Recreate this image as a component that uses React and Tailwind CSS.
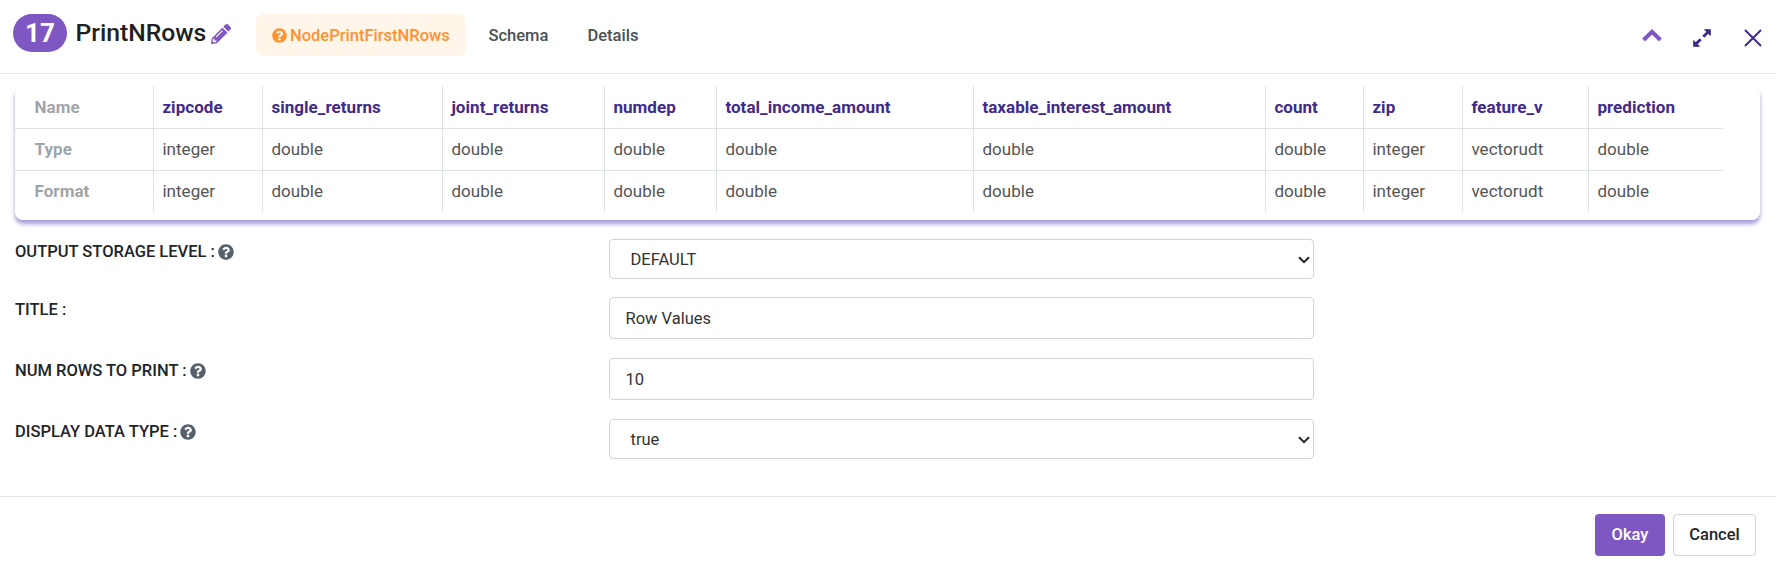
import React from "react";
import { FaQuestionCircle, FaPencilAlt } from "react-icons/fa";

const columns = [
  { name: "zipcode", type: "integer", width: "w-[109px]" },
  { name: "single_returns", type: "double", width: "w-[180px]" },
  { name: "joint_returns", type: "double", width: "w-[162px]" },
  { name: "numdep", type: "double", width: "w-[112px]" },
  { name: "total_income_amount", type: "double", width: "w-[257px]" },
  { name: "taxable_interest_amount", type: "double", width: "w-[292px]" },
  { name: "count", type: "double", width: "w-[98px]" },
  { name: "zip", type: "integer", width: "w-[99px]" },
  { name: "feature_v", type: "vectorudt", width: "w-[126px]" },
  { name: "prediction", type: "double", width: "w-[135px]" },
];

function SchemaRow({ label, field, header, last }) {
  const height = header ? "h-[43px]" : last ? "h-[41px]" : "h-[42px]";
  const pad = header ? "pt-[9px]" : "pt-2";
  return (
    <div className={`flex w-[1708px] text-[17px] tracking-[0.05px] ${height} ${last ? "" : "border-b border-[#dee2e6]"}`}>
      <div className={`w-[138px] pl-[19.5px] font-bold text-[#9fa5ab] ${pad}`}>{label}</div>
      {columns.map((c) => (
        <div
          key={c.name}
          className={`${c.width} ${pad} border-l border-[#dee2e6] pl-[8.4px] ${header ? "font-bold text-[#412a8a]" : "text-[#555555]"}`}
        >
          {c[field]}
        </div>
      ))}
    </div>
  );
}

function Field({ label, help, value, select, className }) {
  return (
    <div className={`flex items-start ${className}`}>
      <div className="flex w-[594px] items-center gap-[3px] pt-px font-medium leading-6 text-[#212529]">
        <span>{label} :</span>
        {help && <FaQuestionCircle className="-mt-px size-4 text-[#56606a]" />}
      </div>
      <div
        className={`flex w-[705px] items-center justify-between rounded border border-[#ced4da] text-[#333333] ${
          select ? "h-10 pl-[20.5px] pr-[3px]" : "h-[42px] pl-[15.5px]"
        }`}
      >
        <span className="pt-px">{value}</span>
        {select && (
          <svg viewBox="0 0 12 8" className="mt-px h-2 w-3" fill="none" stroke="#212529" strokeWidth="2">
            <path d="M1 1.2 6 6.2 11 1.2" />
          </svg>
        )}
      </div>
    </div>
  );
}

export default function App() {
  return (
    <div className="flex h-[565px] w-full flex-col overflow-hidden bg-white font-['Roboto',sans-serif] text-[16.5px] leading-6">
      <header className="flex h-[74px] shrink-0 items-start border-b border-[#e9ebee] pl-[13px] pt-[14px]">
        <div className="flex h-[38px] w-[54px] items-center justify-center rounded-[19px] bg-[#7e57c2] text-[26px] font-bold text-white">
          17
        </div>
        <div className="ml-[8.5px] flex h-[38px] w-[131.5px] items-center text-[24.7px] font-medium text-[#212121]">PrintNRows</div>
        <FaPencilAlt className="ml-[4px] mt-[10px] size-5 text-[#7e57c2]" />
        <div className="ml-[25px] flex h-[42px] w-[210px] items-center gap-1 rounded-lg bg-[#fff5e8] pl-4 font-medium text-[#ff922f]">
          <FaQuestionCircle className="size-[15px] shrink-0" />
          <span className="-ml-px pt-px">NodePrintFirstNRows</span>
        </div>
        <div className="ml-[22.5px] flex h-[42px] w-[60px] items-center pt-px font-medium text-[#495057]">Schema</div>
        <div className="ml-[39px] flex h-[42px] items-center pt-px font-medium text-[#495057]">Details</div>
        <div className="ml-auto flex h-[47px] items-center pr-[14px]">
          <svg viewBox="0 0 20 13" className="-mt-[5px] h-[13px] w-5" fill="none" stroke="#7e57c2" strokeWidth="4">
            <path d="M1.6 11 10 2.9 18.4 11" />
          </svg>
          <svg viewBox="0 0 18 18" className="ml-[31px] size-[18px]" fill="#412a8a" stroke="#412a8a">
            <path d="M11.6.7h5.7v5.7zM.7 11.6v5.7h5.7z" strokeWidth="1" strokeLinejoin="round" />
            <path d="M14.6 3.4 10.3 7.7M7.7 10.3 3.4 14.6" strokeWidth="2.8" fill="none" />
          </svg>
          <svg viewBox="0 0 18 18" className="ml-[33px] size-[18px]" fill="none" stroke="#412a8a" strokeWidth="2">
            <path d="M1 1 17 17M17 1 1 17" />
          </svg>
        </div>
      </header>

      <main className="flex-1 px-[15px] pt-[12px]">
        <section className="h-[134px] w-[1745px] rounded-lg bg-white shadow-[0_4px_4px_0_#a79fd8]">
          <SchemaRow label="Name" field="name" header />
          <SchemaRow label="Type" field="type" />
          <SchemaRow label="Format" field="type" last />
        </section>
        <Field className="mt-[19px]" label="OUTPUT STORAGE LEVEL" help value="DEFAULT" select />
        <Field className="mt-[18px]" label="TITLE" value="Row Values" />
        <Field className="mt-[19px]" label="NUM ROWS TO PRINT" help value="10" />
        <Field className="mt-[19px]" label="DISPLAY DATA TYPE" help value="true" select />
      </main>

      <footer className="flex h-[69px] shrink-0 items-start justify-end gap-2 border-t border-[#e5e9ee] pr-5 pt-[17px]">
        <button className="h-[42px] w-[70px] rounded bg-[#7e57c2] font-medium text-white">Okay</button>
        <button className="h-[42px] w-[83px] rounded border border-[#ced4da] bg-white font-medium text-[#212529]">Cancel</button>
      </footer>
    </div>
  );
}
